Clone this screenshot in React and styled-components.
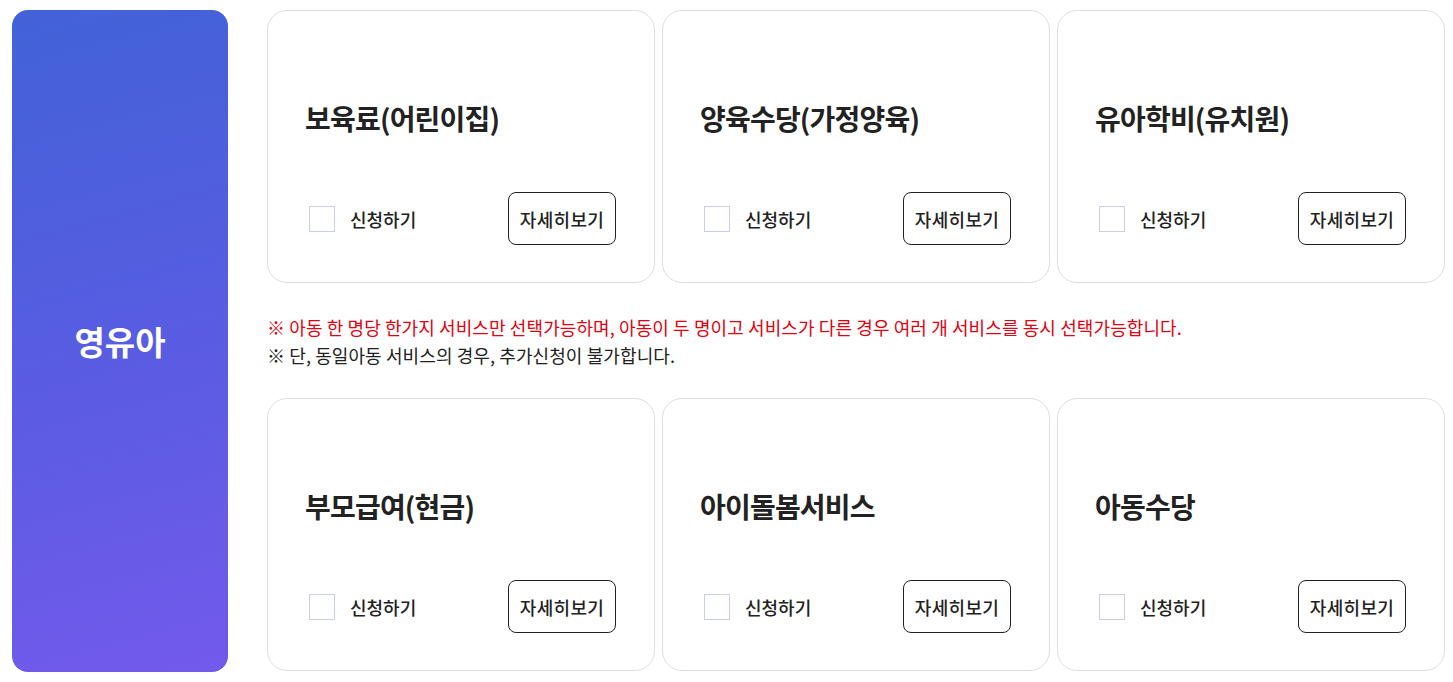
import styled, { createGlobalStyle } from 'styled-components'

const Global = createGlobalStyle`
    body {
        margin: 0;
        background: #fff;
        font-family: "Noto Sans CJK KR", "Noto Sans", sans-serif;
        color: #222;
    }
`

const Pagina = styled.main`
    display: flex;
    gap: 39px;
    padding: 10px 8px 10px 12px;
    height: 682px;
    box-sizing: border-box;
`

const Categoria = styled.aside`
    flex: 0 0 216px;
    border-radius: 16px;
    background: linear-gradient(165deg, #4262d8 0%, #5a5ce2 55%, #735aec 100%);
    display: flex;
    align-items: center;
    justify-content: center;
    color: #fff;
    font-size: 33px;
    font-weight: 700;
`

const Conteudo = styled.section`
    flex: 1;
    display: flex;
    flex-direction: column;
`

const Grade = styled.div`
    display: grid;
    grid-template-columns: repeat(3, 1fr);
    gap: 7px;
`

const Cartao = styled.div`
    height: 273px;
    box-sizing: border-box;
    border: 1px solid #dedede;
    border-radius: 20px;
    padding: 87px 38px 0 37px;
    display: flex;
    flex-direction: column;
`

const Titulo = styled.h3`
    margin: 0 0 54px;
    font-size: 28px;
    line-height: 40px;
    font-weight: 700;
    letter-spacing: -0.8px;
    color: #222;
`

const Linha = styled.div`
    display: flex;
    align-items: center;
    justify-content: space-between;
`

const Rotulo = styled.label`
    display: flex;
    align-items: center;
    gap: 15px;
    margin-left: 4px;
    font-size: 18px;
    font-weight: 500;
    color: #222;
`

const Caixa = styled.span`
    width: 24px;
    height: 24px;
    border: 1px solid #cbcfe6;
    background: #fff;
`

const Botao = styled.button`
    width: 108px;
    height: 53px;
    border: 1px solid #222;
    border-radius: 8px;
    background: #fff;
    font-family: inherit;
    font-size: 18px;
    font-weight: 500;
    letter-spacing: 0.3px;
    color: #222;
    padding: 0;
`

const Aviso = styled.div`
    padding: 30px 0 29px;
    font-size: 18px;
    line-height: 28px;
    letter-spacing: 0.1px;
`

const Frase = styled.p`
    margin: 0;
    color: ${props => props.$alerta ? '#e3000f' : '#222'};
`

const primeira = ['보육료(어린이집)', '양육수당(가정양육)', '유아학비(유치원)']
const segunda = ['부모급여(현금)', '아이돌봄서비스', '아동수당']

function Servico({ nome }) {
    return (
        <Cartao>
            <Titulo>{nome}</Titulo>
            <Linha>
                <Rotulo><Caixa />신청하기</Rotulo>
                <Botao>자세히보기</Botao>
            </Linha>
        </Cartao>
    )
}

export default function App() {
    return (
        <>
            <Global />
            <Pagina>
                <Categoria>영유아</Categoria>
                <Conteudo>
                    <Grade>
                        {primeira.map(n => <Servico key={n} nome={n} />)}
                    </Grade>
                    <Aviso>
                        <Frase $alerta>※ 아동 한 명당 한가지 서비스만 선택가능하며, 아동이 두 명이고 서비스가 다른 경우 여러 개 서비스를 동시 선택가능합니다.</Frase>
                        <Frase>※ 단, 동일아동 서비스의 경우, 추가신청이 불가합니다.</Frase>
                    </Aviso>
                    <Grade>
                        {segunda.map(n => <Servico key={n} nome={n} />)}
                    </Grade>
                </Conteudo>
            </Pagina>
        </>
    )
}
